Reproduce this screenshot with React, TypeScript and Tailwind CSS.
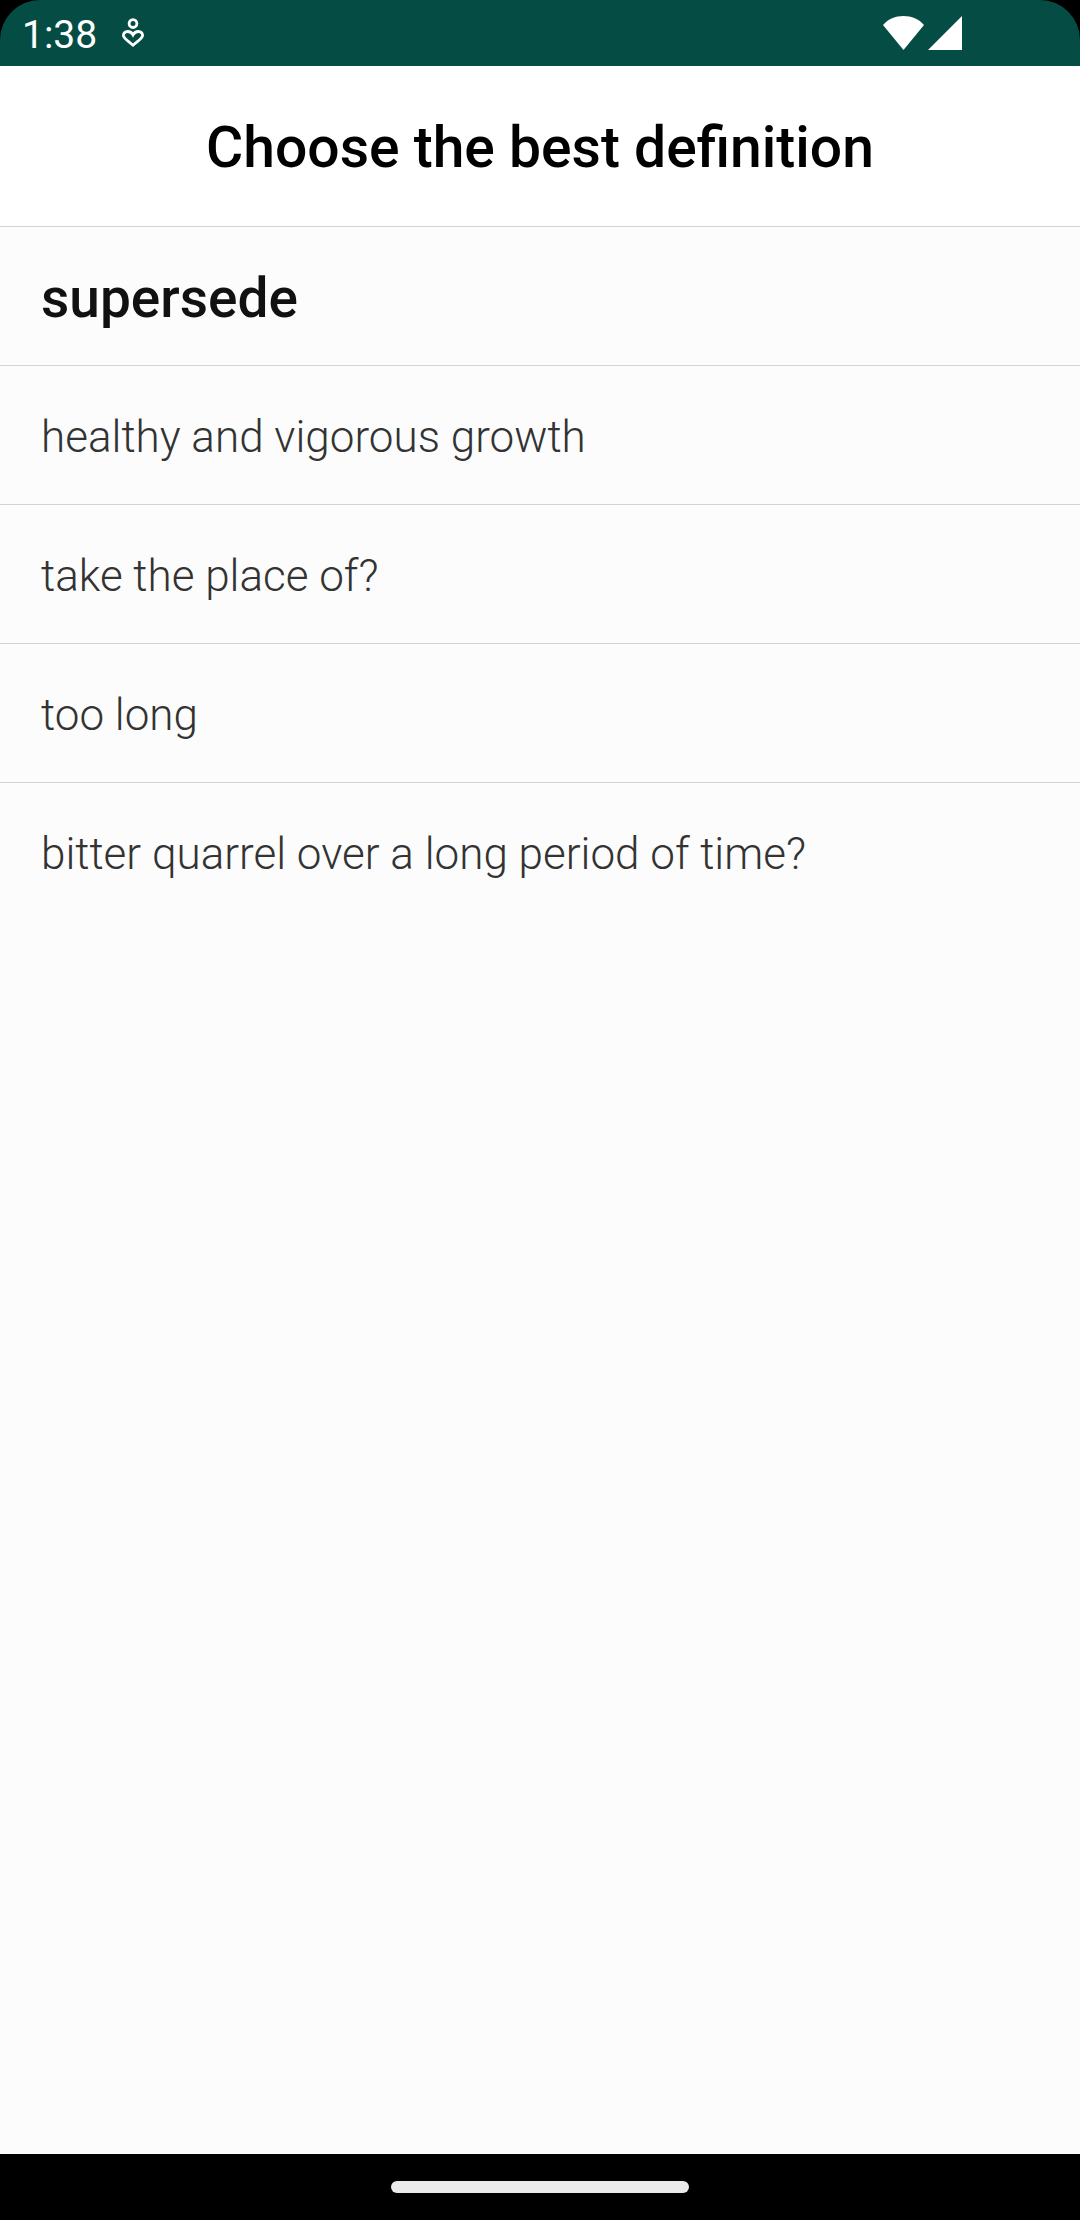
import type React from "react"

const definitions = [
  "healthy and vigorous growth",
  "take the place of?",
  "too long",
  "bitter quarrel over a long period of time?",
]

const App: React.FC = () => {
  return (
    <div className="flex flex-col min-h-screen bg-[#fcfcfc] font-[Roboto,sans-serif]">
      {/* Status bar */}
      <div className="bg-black">
        <div className="flex items-center h-[66px] pl-[22px] pr-[118px] rounded-t-[40px] bg-[#054d44] text-white">
          <span className="pt-1 text-[39px] leading-[44px]">1:38</span>
          <svg className="ml-[25px] w-[22px] h-[30px]" viewBox="0 0 22 30" fill="none" stroke="currentColor" strokeWidth="2.8">
            <circle cx="11" cy="5.6" r="3.9" />
            <path d="M11 27.2C6 22.8 1.4 20.2 1.4 17.5c0-2.3 1.8-4 4.2-4S9.8 14.6 11 16.8c1.2-2.2 3-3.3 5.4-3.3s4.2 1.7 4.2 4c0 2.7-4.6 5.3-9.6 9.7Z" />
          </svg>
          <svg className="ml-auto w-[41px] h-[34px]" viewBox="0 0 41 34" fill="currentColor">
            <path d="M20.5 34 0 9C5 3 12.5 0 20.5 0S36 3 41 9Z" />
          </svg>
          <svg className="ml-1 w-[34px] h-[34px]" viewBox="0 0 34 34" fill="currentColor">
            <path d="M34 0v34H0Z" />
          </svg>
        </div>
      </div>

      {/* Header */}
      <header className="flex items-center justify-center h-[161px] pt-1 bg-white border-b border-[#d3d3d3]">
        <h1 className="text-[57px] font-medium text-black">Choose the best definition</h1>
      </header>

      {/* Word and its definitions */}
      <main className="flex-1">
        <h2 className="flex items-center h-[138px] pt-1 px-[41px] text-[55px] font-medium text-[#111]">supersede</h2>
        <ul>
          {definitions.map((definition) => (
            <li key={definition} className="border-t border-[#d3d3d3]">
              <button className="w-full h-[138px] pt-1 px-[41px] text-left text-[44px] font-light text-[#333]">
                {definition}
              </button>
            </li>
          ))}
        </ul>
      </main>

      {/* Navigation bar */}
      <div className="flex items-center justify-center h-[66px] bg-black">
        <div className="w-[298px] h-3 rounded-full bg-[#ebebeb]"></div>
      </div>
    </div>
  )
}

export default App
